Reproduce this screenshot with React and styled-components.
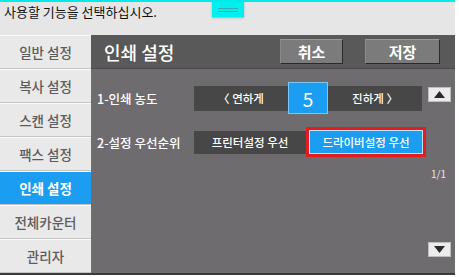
import React from "react";
import styled, { createGlobalStyle } from "styled-components";

const GlobalStyle = createGlobalStyle`
  body {
    margin: 0;
    background: #ffffff;
    font-family: "Noto Sans CJK KR", "Noto Sans", sans-serif;
  }
`;

const Screen = styled.div`
  position: relative;
  width: 455px;
  height: 275px;
  display: flex;
  flex-direction: column;
  background: #e6e6e6;
  border-top: 2px solid #00eaea;
  box-sizing: border-box;
  overflow: hidden;
`;

const TopBar = styled.div`
  height: 33px;
  padding: 2px 0 0 4px;
  box-sizing: border-box;
  font-size: 13px;
  line-height: 16px;
  color: #111;
`;

const PullTab = styled.div`
  position: absolute;
  top: -2px;
  left: 212px;
  width: 32px;
  height: 17px;
  background: #00f0f0;
  box-shadow: 0 1px 2px rgba(0, 0, 0, 0.25);
  display: flex;
  flex-direction: column;
  align-items: center;
  justify-content: center;
  gap: 2px;
  padding-top: 2px;
  box-sizing: border-box;

  span {
    width: 20px;
    height: 1px;
    background: #3aa9b0;
  }
`;

const Body = styled.div`
  flex: 1;
  display: flex;
  border-bottom: 2px solid #3a3a3a;
`;

const Sidebar = styled.div`
  width: 91px;
  display: flex;
  flex-direction: column;
  background: #d8d8d8;
`;

const NavItem = styled.div`
  height: 34px;
  display: flex;
  align-items: center;
  justify-content: center;
  box-sizing: border-box;
  border-top: 1px solid #fafafa;
  border-bottom: 1px solid #c4c4c4;
  background: ${({ active }) => (active ? "#1b9df2" : "#e9e9e9")};
  color: ${({ active }) => (active ? "#ffffff" : "#5c5c5c")};
  font-size: 13.5px;
  font-weight: ${({ active }) => (active ? 700 : 500)};
`;

const Main = styled.div`
  flex: 1;
  display: flex;
  flex-direction: column;
  background: #6f6c6f;
`;

const Header = styled.div`
  height: 33px;
  display: flex;
  align-items: center;
  padding: 0 15px 0 13px;
  background: #595959;
  border-bottom: 1px solid #4a4a4a;
  color: #fff;
  gap: 22px;
`;

const Title = styled.div`
  flex: 1;
  font-size: 18px;
  font-weight: 500;
`;

const HeadButton = styled.div`
  width: ${({ w }) => w}px;
  height: 25px;
  box-sizing: border-box;
  display: flex;
  align-items: center;
  justify-content: center;
  background: #7b7b7b;
  border: 1px solid #2a2a2a;
  border-top-color: #9a9a9a;
  border-left-color: #8a8a8a;
  font-size: 15px;
  font-weight: 700;
`;

const Content = styled.div`
  flex: 1;
  display: flex;
  flex-direction: column;
  padding: 13px 4px 16px 6px;
`;

const Row = styled.div`
  display: flex;
  align-items: center;
  height: ${({ h }) => h}px;
  margin-top: ${({ mt }) => mt || 0}px;
`;

const Label = styled.div`
  width: 97px;
  color: #fff;
  font-size: 12.5px;
  font-weight: 500;
`;

const Bar = styled.div`
  display: flex;
  align-items: center;
  height: ${({ h }) => h}px;
  background: #474747;
`;

const Step = styled.div`
  width: 94px;
  text-align: center;
  color: #fff;
  font-size: 11.5px;
  font-weight: 500;
`;

const Value = styled.div`
  width: 40px;
  height: 32px;
  box-sizing: border-box;
  display: flex;
  align-items: center;
  justify-content: center;
  background: #1b9df2;
  border: 1px solid #7cc8f7;
  color: #fff;
  font-size: 19px;
`;

const Choice = styled.div`
  width: 112px;
  text-align: center;
  color: #fff;
  font-size: 11.5px;
  font-weight: 500;
`;

const Selected = styled.div`
  width: 120px;
  height: 30px;
  box-sizing: border-box;
  border: 3px solid #e31d1d;
  display: flex;

  div {
    flex: 1;
    display: flex;
    align-items: center;
    justify-content: center;
    background: #1b9df2;
    border: 1px solid #bfe3fb;
    color: #fff;
    font-size: 11.5px;
    font-weight: 500;
  }
`;

const ScrollButton = styled.div`
  width: 23px;
  height: 15px;
  margin-left: 6px;
  margin-top: ${({ mt }) => mt || 0}px;
  align-self: ${({ self }) => self || "center"};
  display: flex;
  align-items: center;
  justify-content: center;
  background: #ececec;
  border: 1px solid #bdbdbd;
  box-sizing: border-box;
`;

const PageInfo = styled.div`
  align-self: flex-end;
  margin: 9px 5px 0 0;
  color: #e8e8e8;
  font-size: 10px;
`;

const Footer = styled.div`
  margin-top: auto;
  display: flex;
  justify-content: flex-end;
`;

const menu = ["일반 설정", "복사 설정", "스캔 설정", "팩스 설정", "인쇄 설정", "전체카운터", "관리자"];

const Arrow = ({ up }) => (
  <svg width="11" height="7" viewBox="0 0 11 7">
    <polygon points={up ? "5.5,0 11,7 0,7" : "0,0 11,0 5.5,7"} fill="#2b2b2b" />
  </svg>
);

export default function App() {
  return (
    <>
      <GlobalStyle />
      <Screen>
        <PullTab>
          <span />
          <span />
        </PullTab>
        <TopBar>사용할 기능을 선택하십시오.</TopBar>
        <Body>
          <Sidebar>
            {menu.map((m) => (
              <NavItem key={m} active={m === "인쇄 설정"}>
                {m}
              </NavItem>
            ))}
          </Sidebar>
          <Main>
            <Header>
              <Title>인쇄 설정</Title>
              <HeadButton w={63}>취소</HeadButton>
              <HeadButton w={75}>저장</HeadButton>
            </Header>
            <Content>
              <Row h={32}>
                <Label>1-인쇄 농도</Label>
                <Bar h={25}>
                  <Step>〈 연하게</Step>
                  <Value>5</Value>
                  <Step>진하게 〉</Step>
                </Bar>
                <ScrollButton self="flex-start" mt={5}>
                  <Arrow up />
                </ScrollButton>
              </Row>
              <Row h={30} mt={13}>
                <Label>2-설정 우선순위</Label>
                <Bar h={23}>
                  <Choice>프린터설정 우선</Choice>
                </Bar>
                <Selected>
                  <div>드라이버설정 우선</div>
                </Selected>
              </Row>
              <PageInfo>1/1</PageInfo>
              <Footer>
                <ScrollButton>
                  <Arrow />
                </ScrollButton>
              </Footer>
            </Content>
          </Main>
        </Body>
      </Screen>
    </>
  );
}
